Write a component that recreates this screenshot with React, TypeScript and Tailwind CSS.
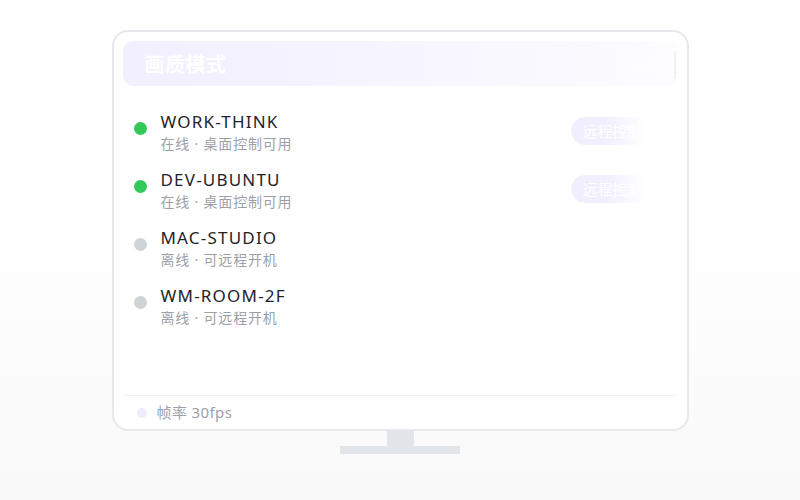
import React from "react";

type Device = {
  name: string;
  online: boolean;
  status: string;
};

const devices: Device[] = [
  { name: "WORK-THINK", online: true, status: "在线 · 桌面控制可用" },
  { name: "DEV-UBUNTU", online: true, status: "在线 · 桌面控制可用" },
  { name: "MAC-STUDIO", online: false, status: "离线 · 可远程开机" },
  { name: "WM-ROOM-2F", online: false, status: "离线 · 可远程开机" },
];

const font = {
  fontFamily: '"Noto Sans", "Noto Sans CJK SC", sans-serif',
};

function DeviceRow({ d }: { d: Device }) {
  return (
    <div className="flex h-[58px] items-start pl-[11px] pr-[23px]">
      <span
        className={`mt-[11px] h-[13px] w-[13px] shrink-0 rounded-full ${
          d.online ? "bg-[#34c759]" : "bg-[#cfd3d8]"
        }`}
      />
      <div className="ml-[14px] flex flex-1 flex-col">
        <span className="text-[17px] leading-[22px] tracking-[1.2px] text-[#1f2329]">
          {d.name}
        </span>
        <span className="text-[14px] leading-[22px] tracking-[0.8px] text-[#9ca1a9]">
          {d.status}
        </span>
      </div>
      {d.online && (
        <span className="mt-[6px] flex h-[28px] w-[84px] items-center rounded-full bg-[#f1eeff] pl-[12px] text-[15px] text-white [mask-image:linear-gradient(to_right,black_40%,transparent_90%)]">
          远程控制
        </span>
      )}
    </div>
  );
}

export default function App() {
  return (
    <div
      className="flex h-[500px] w-[800px] flex-col items-center bg-gradient-to-b from-white from-40% to-[#f9f9fa] pt-[30px]"
      style={font}
    >
      <div className="flex h-[401px] w-[577px] flex-col rounded-[16px] border-2 border-[#e6e8eb] bg-white px-[9px] pt-[9px]">
        {/* picture mode banner */}
        <div className="flex h-[45px] items-center justify-between rounded-[10px] bg-gradient-to-r from-[#f2efff] via-[#f7f5ff] to-[#fdfcff] pl-[22px] pr-[2px] pt-[3px]">
          <span className="text-[20px] font-bold tracking-[0.5px] text-white">画质模式</span>
          <div className="flex items-center gap-[14px]">
            <span className="text-[15px] text-white">clock</span>
            <span className="h-[28px] w-[2px] bg-[#f0f1f4]" />
          </div>
        </div>

        <div className="mt-[25px] flex flex-col">
          {devices.map((d) => (
            <DeviceRow key={d.name} d={d} />
          ))}
        </div>

        <div className="flex-1" />

        <div className="mx-[1px] flex h-[34px] items-center border-t border-[#eef0f3] pl-[13px]">
          <span className="h-[10px] w-[10px] rounded-full bg-[#efecff]" />
          <span className="ml-[10px] text-[15px] tracking-[0.4px] text-[#9ca1a9]">帧率 30fps</span>
        </div>
      </div>

      {/* stand */}
      <div className="h-[15px] w-[27px] bg-[#e2e5e9]" />
      <div className="h-[8px] w-[120px] bg-[#e2e5e9]" />
    </div>
  );
}
